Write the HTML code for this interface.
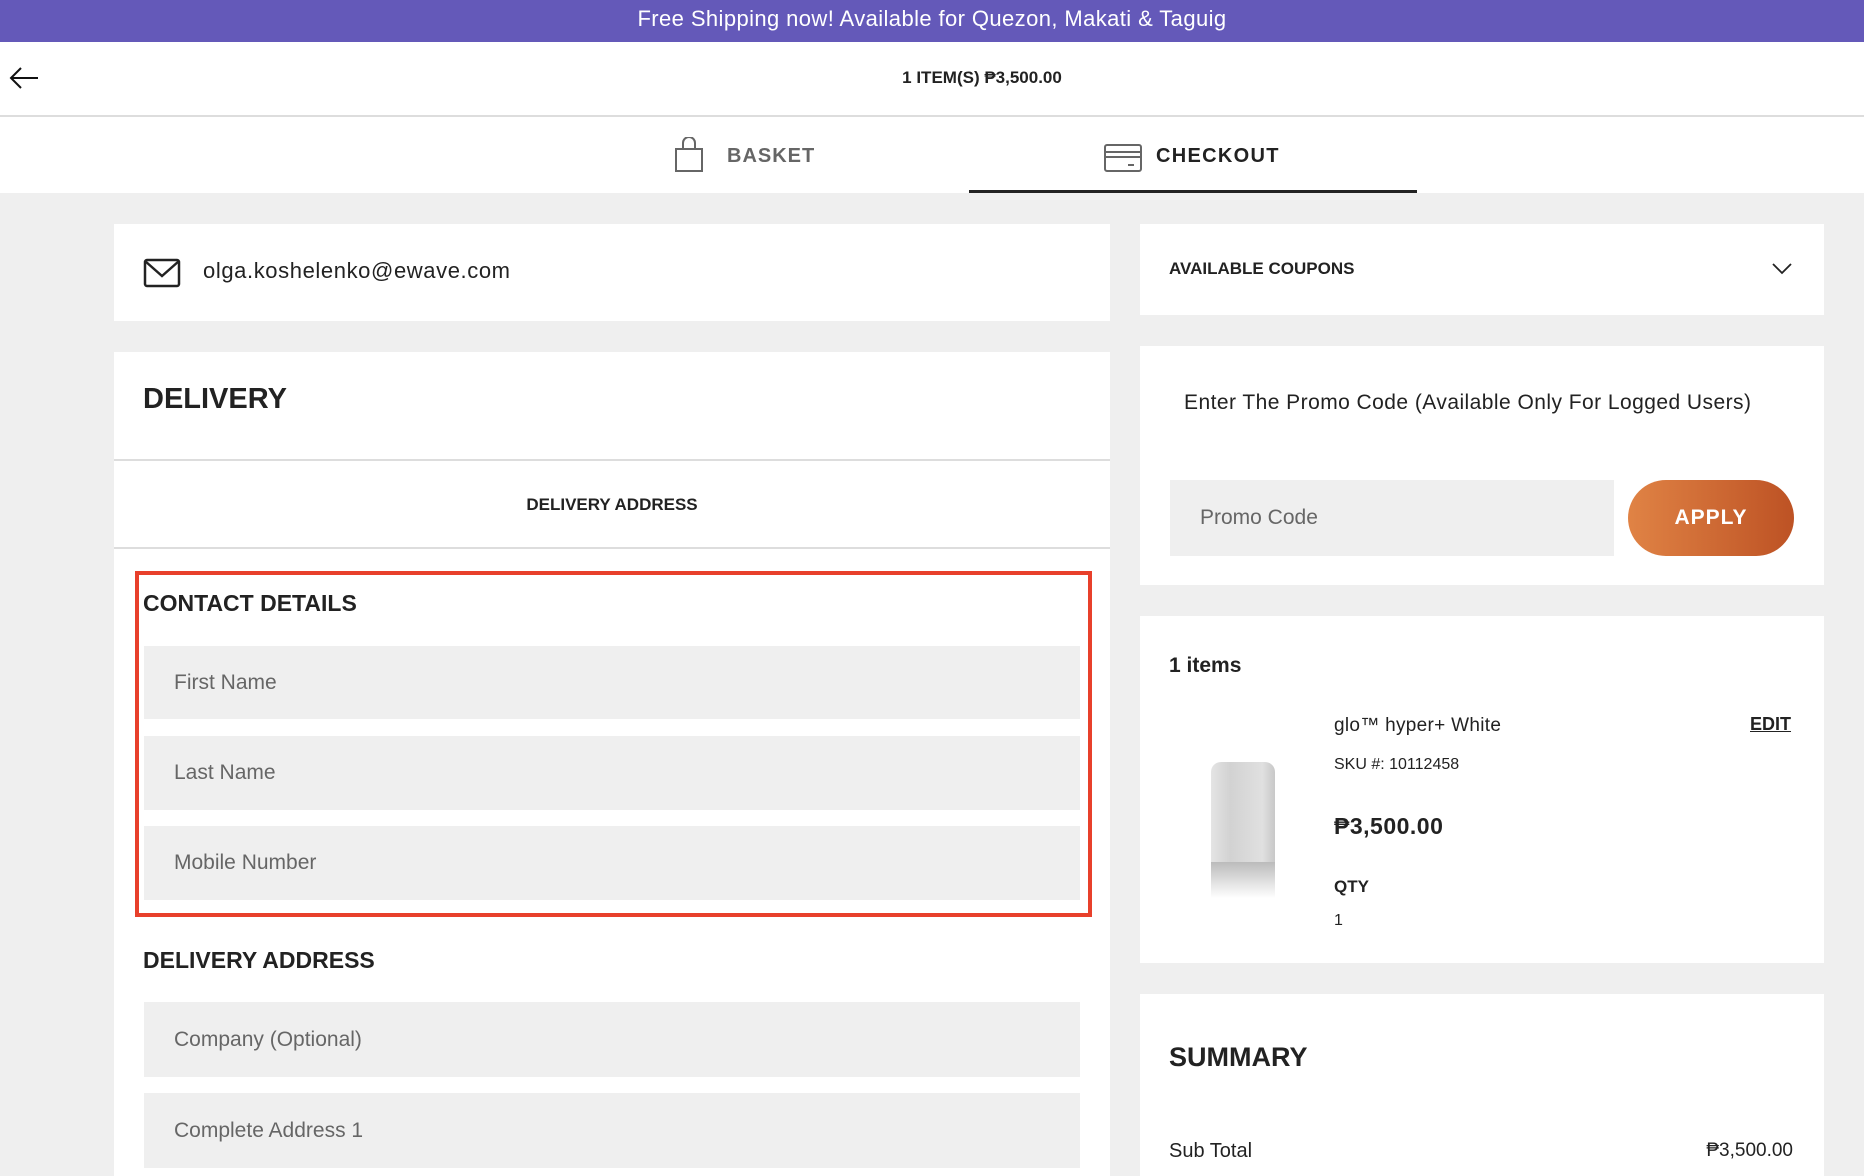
<!DOCTYPE html>
<html><head><meta charset="utf-8"><style>
*{margin:0;padding:0;box-sizing:border-box}
body{width:1864px;height:1176px;overflow:hidden;background:#efefef;font-family:"Liberation Sans",sans-serif;color:#222;position:relative}
.a{position:absolute}
.card{position:absolute;background:#fff}
.in{position:absolute;background:#efefef;color:#666;font-size:21px;padding-left:30px;display:flex;align-items:center}
.b{font-weight:bold}
</style></head><body>
<div class="a" style="left:0;top:0;width:1864px;height:42px;background:#6459b9;color:#fff;font-size:22px;text-align:center;line-height:38px;letter-spacing:0.4px">Free Shipping now! Available for Quezon, Makati &amp; Taguig</div>
<div class="a" style="left:0;top:42px;width:1864px;height:75px;background:#fff;border-bottom:2px solid #ddd"></div>
<svg class="a" style="left:8px;top:66px" width="32" height="24" viewBox="0 0 32 24"><path d="M30 12H3M13 2L3 12l10 10" fill="none" stroke="#111" stroke-width="2"/></svg>
<div class="a b" style="left:0;top:68px;width:1964px;text-align:center;font-size:17px;color:#222">1 ITEM(S) ₱3,500.00</div>
<div class="a" style="left:0;top:117px;width:1864px;height:76px;background:#fff"></div>
<svg class="a" style="left:674px;top:137px" width="30" height="36" viewBox="0 0 30 36"><path d="M2 12h26v22H2zM9 12V6a6 6 0 0 1 12 0v6" fill="none" stroke="#666" stroke-width="2"/></svg>
<div class="a b" style="left:727px;top:145px;font-size:20px;color:#666;letter-spacing:1px">BASKET</div>
<svg class="a" style="left:1104px;top:144px" width="38" height="28" viewBox="0 0 38 28"><rect x="1" y="1" width="36" height="26" rx="2" fill="none" stroke="#666" stroke-width="2"/><path d="M1 8h36M1 13h36M24 21h6" stroke="#666" stroke-width="2"/></svg>
<div class="a b" style="left:1156px;top:145px;font-size:20px;color:#222;letter-spacing:1.3px">CHECKOUT</div>
<div class="a" style="left:969px;top:190px;width:448px;height:3px;background:#222"></div>

<div class="card" style="left:114px;top:224px;width:996px;height:97px"></div>
<svg class="a" style="left:143px;top:258px" width="38" height="30" viewBox="0 0 38 30"><rect x="2" y="2" width="34" height="26" rx="2" fill="none" stroke="#222" stroke-width="2.5"/><path d="M2 3l17 15L36 3" fill="none" stroke="#222" stroke-width="2.5"/></svg>
<div class="a" style="left:203px;top:258px;font-size:22px;color:#222;letter-spacing:0.6px">olga.koshelenko@ewave.com</div>

<div class="card" style="left:114px;top:352px;width:996px;height:824px"></div>
<div class="a b" style="left:143px;top:383px;font-size:29px">DELIVERY</div>
<div class="a" style="left:114px;top:459px;width:996px;height:2px;background:#ddd"></div>
<div class="a b" style="left:114px;top:495px;width:996px;text-align:center;font-size:17px">DELIVERY ADDRESS</div>
<div class="a" style="left:114px;top:547px;width:996px;height:2px;background:#ddd"></div>
<div class="a" style="left:135px;top:571px;width:957px;height:346px;border:4px solid #e8402b"></div>
<div class="a b" style="left:143px;top:590px;font-size:23px">CONTACT DETAILS</div>
<div class="in" style="left:144px;top:646px;width:936px;height:73px">First Name</div>
<div class="in" style="left:144px;top:736px;width:936px;height:74px">Last Name</div>
<div class="in" style="left:144px;top:826px;width:936px;height:74px">Mobile Number</div>
<div class="a b" style="left:143px;top:947px;font-size:23px">DELIVERY ADDRESS</div>
<div class="in" style="left:144px;top:1002px;width:936px;height:75px">Company (Optional)</div>
<div class="in" style="left:144px;top:1093px;width:936px;height:75px">Complete Address 1</div>

<div class="card" style="left:1140px;top:224px;width:684px;height:91px"></div>
<div class="a b" style="left:1169px;top:259px;font-size:17px">AVAILABLE COUPONS</div>
<svg class="a" style="left:1772px;top:262px" width="20" height="14" viewBox="0 0 20 14"><path d="M1 2l9 9 9-9" fill="none" stroke="#222" stroke-width="1.8"/></svg>
<div class="card" style="left:1140px;top:346px;width:684px;height:239px"></div>
<div class="a" style="left:1184px;top:391px;font-size:21px;color:#222;letter-spacing:0.45px">Enter The Promo Code (Available Only For Logged Users)</div>
<div class="in" style="left:1170px;top:480px;width:444px;height:76px">Promo Code</div>
<div class="a b" style="left:1628px;top:480px;width:166px;height:76px;border-radius:38px;background:linear-gradient(90deg,#e08345,#bd5224);color:#fff;font-size:21px;letter-spacing:1px;display:flex;align-items:center;justify-content:center">APPLY</div>

<div class="card" style="left:1140px;top:616px;width:684px;height:347px"></div>
<div class="a b" style="left:1169px;top:654px;font-size:21px">1 items</div>
<div class="a" style="left:1211px;top:762px;width:64px;height:118px;border-radius:10px;background:linear-gradient(90deg,#e4e4e4,#d2d2d2 30%,#e0e0e0 80%,#c8c8c8)"></div>
<div class="a" style="left:1211px;top:862px;width:64px;height:36px;background:linear-gradient(#bbb,#fff)"></div>
<div class="a" style="left:1334px;top:715px;font-size:19px;letter-spacing:0.3px">glo™ hyper+ White</div>
<div class="a b" style="left:1750px;top:714px;font-size:18px;text-decoration:underline">EDIT</div>
<div class="a" style="left:1334px;top:756px;font-size:16px">SKU #: 10112458</div>
<div class="a b" style="left:1334px;top:813px;font-size:23px;letter-spacing:0.5px">₱3,500.00</div>
<div class="a b" style="left:1334px;top:877px;font-size:17px">QTY</div>
<div class="a" style="left:1334px;top:912px;font-size:16px">1</div>

<div class="card" style="left:1140px;top:994px;width:684px;height:182px"></div>
<div class="a b" style="left:1169px;top:1042px;font-size:27px">SUMMARY</div>
<div class="a" style="left:1169px;top:1140px;font-size:20px">Sub Total</div>
<div class="a" style="left:1600px;top:1140px;width:193px;text-align:right;font-size:19px">₱3,500.00</div>
</body></html>
